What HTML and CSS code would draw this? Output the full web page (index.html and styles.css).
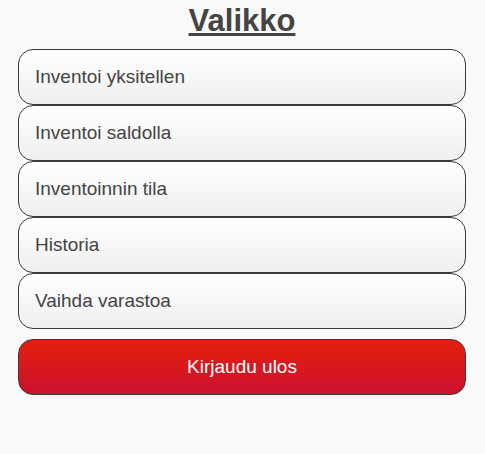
FILE: index.html
```html
<!DOCTYPE html>
<html lang="fi">
<head>
<meta charset="utf-8">
<title>Valikko</title>
<link rel="stylesheet" href="styles.css">
</head>
<body>
<main class="page">
  <h1 class="title">Valikko</h1>
  <nav class="menu">
    <a class="menu-btn" href="#">Inventoi yksitellen</a>
    <a class="menu-btn" href="#">Inventoi saldolla</a>
    <a class="menu-btn" href="#">Inventoinnin tila</a>
    <a class="menu-btn" href="#">Historia</a>
    <a class="menu-btn" href="#">Vaihda varastoa</a>
  </nav>
  <a class="logout-btn" href="#">Kirjaudu ulos</a>
</main>
</body>
</html>
```
FILE: styles.css
```css
html, body {
  margin: 0;
  padding: 0;
  background: #f9f9f9;
}
body {
  font-family: "Liberation Sans", Arial, sans-serif;
  color: #444;
}
.page {
  padding: 0 19px 0 18px;
  display: flex;
  flex-direction: column;
}
.title {
  margin: 3px 0 11px;
  text-align: center;
  font-size: 31px;
  font-weight: bold;
  line-height: 35px;
  text-decoration: underline;
  text-decoration-thickness: 3px;
  text-underline-offset: 2px;
  color: #444;
}
.menu {
  display: flex;
  flex-direction: column;
}
.menu-btn {
  box-sizing: border-box;
  height: 56px;
  display: flex;
  align-items: center;
  padding-left: 16px;
  border: 1px solid #3a3a3a;
  border-radius: 15px;
  background: linear-gradient(#ffffff, #efefef);
  color: #444;
  text-decoration: none;
  font-size: 19px;
}
.logout-btn {
  box-sizing: border-box;
  margin-top: 10px;
  height: 56px;
  display: flex;
  align-items: center;
  justify-content: center;
  border: 1px solid #3a3a3a;
  border-radius: 15px;
  background: linear-gradient(#e3200c, #cc102f);
  color: #fff;
  text-decoration: none;
  font-size: 19px;
}
```
